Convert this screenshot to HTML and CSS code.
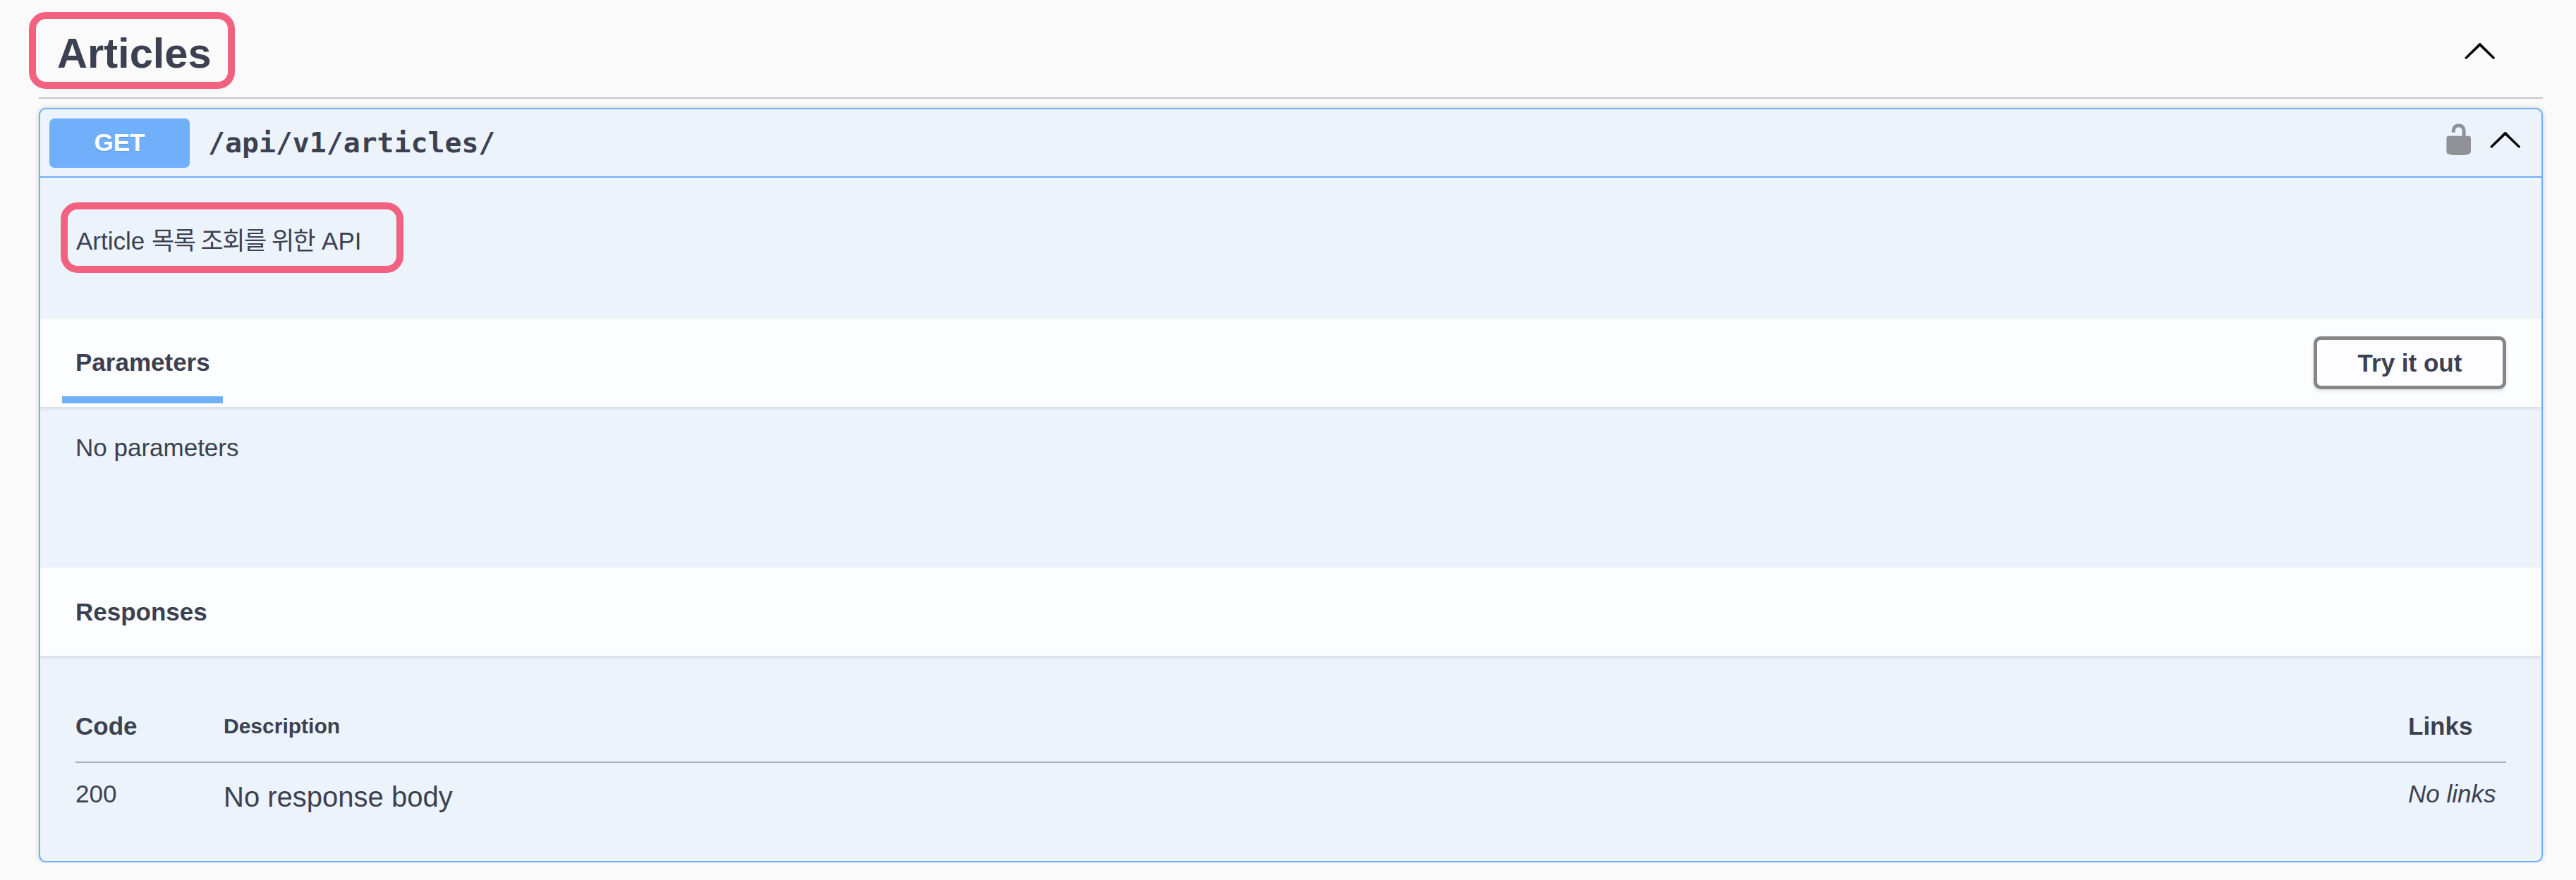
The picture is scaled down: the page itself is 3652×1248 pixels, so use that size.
FILE: index.html
```html
<!DOCTYPE html>
<html lang="ko">
<head>
    <meta charset="UTF-8">
    <meta name="viewport" content="width=device-width, initial-scale=1.0">
    <title>Articles API</title>
    <link rel="stylesheet" href="styles.css">
</head>
<body>
    <section class="tag-section">
        <div class="tag-header">
            <h4 class="tag-title callout">Articles</h4>
            <svg class="arrow-up tag-arrow" viewBox="0 0 20 20"><path d="M17.418 6.109c.272-.268.709-.268.979 0s.271.701 0 .969l-7.908 7.83c-.27.268-.707.268-.979 0l-7.908-7.83c-.27-.268-.27-.701 0-.969.271-.268.709-.268.979 0L10 13.25l7.418-7.141z"/></svg>
        </div>

        <div class="opblock">
            <div class="opblock-summary">
                <span class="method">GET</span>
                <span class="path">/api/v1/articles/</span>
                <svg class="lock" viewBox="0 0 20 20"><path d="M15.8 8H14V5.6C14 2.703 12.665 1 10 1 7.334 1 6 2.703 6 5.6V6h2v-.801C8 3.754 8.797 3 10 3c1.203 0 2 .754 2 2.199V8H4c-.553 0-1 .646-1 1.199V17c0 .549.428 1.139.951 1.307l1.197.387C5.672 18.861 6.55 19 7.1 19h5.8c.549 0 1.428-.139 1.951-.307l1.196-.387c.524-.167.953-.757.953-1.306V9.199C17 8.646 16.352 8 15.8 8z"/></svg>
                <svg class="arrow-up summary-arrow" viewBox="0 0 20 20"><path d="M17.418 6.109c.272-.268.709-.268.979 0s.271.701 0 .969l-7.908 7.83c-.27.268-.707.268-.979 0l-7.908-7.83c-.27-.268-.27-.701 0-.969.271-.268.709-.268.979 0L10 13.25l7.418-7.141z"/></svg>
            </div>

            <div class="description">
                <p class="description-text callout">Article <span class="hangul">목록 조회를 위한</span> API</p>
            </div>

            <div class="section-header">
                <div class="tab">Parameters</div>
                <button class="try-out" type="button">Try it out</button>
            </div>
            <div class="parameters">No parameters</div>

            <div class="section-header responses-header">Responses</div>
            <div class="responses">
                <table class="responses-table">
                    <thead>
                        <tr>
                            <th class="col-code">Code</th>
                            <th class="col-desc">Description</th>
                            <th class="col-links">Links</th>
                        </tr>
                    </thead>
                    <tbody>
                        <tr>
                            <td>200</td>
                            <td class="response-desc">No response body</td>
                            <td class="no-links">No links</td>
                        </tr>
                    </tbody>
                </table>
            </div>
        </div>
    </section>
</body>
</html>
```

FILE: styles.css
```css
body {
    margin: 0;
    background-color: #fafafa;
    color: #3b4151;
    font-family: "Liberation Sans", "Noto Sans CJK KR", sans-serif;
    font-size: 35px;
}
.tag-section {
    padding: 0 47px 0 55px;
}
.tag-header {
    display: flex;
    justify-content: space-between;
    align-items: flex-start;
    height: 140px;
    box-sizing: border-box;
    padding: 17px 65px 0 0;
    border-bottom: 2px solid #c4c5c9;
}
.callout {
    border: 10px solid #f26280;
    border-radius: 24px;
}
.tag-title {
    margin: 0 0 0 -14px;
    padding: 9px 23px 0 30px;
    font-size: 59.6px;
    line-height: 80px;
    font-weight: 700;
}
.arrow-up {
    width: 49.4px;
    height: 49.4px;
    fill: #000;
    transform: rotate(180deg);
}
.tag-arrow {
    margin-top: 32px;
}
.opblock {
    margin-top: 13px;
    height: 1070px;
    box-sizing: border-box;
    background-color: #ecf3fb;
    border: 2px solid #6eaffb;
    border-radius: 10px;
    box-shadow: 0 0 7px rgba(0, 0, 0, 0.19);
    overflow: hidden;
}
.opblock-summary {
    display: flex;
    align-items: center;
    height: 97px;
    box-sizing: border-box;
    padding: 0 27px 0 13px;
    border-bottom: 2px solid #6eaffb;
}
.method {
    width: 199px;
    height: 70px;
    line-height: 67px;
    text-align: center;
    background-color: #70b0fb;
    border-radius: 7px;
    color: #fff;
    font-size: 35px;
    font-weight: 700;
    text-shadow: 0 2px 0 rgba(0, 0, 0, 0.1);
}
.path {
    margin-left: 26px;
    flex: 1;
    font-family: "DejaVu Sans Mono", monospace;
    font-size: 39.8px;
    line-height: 46px;
    margin-bottom: 2px;
    font-weight: 700;
}
.lock {
    width: 49.4px;
    height: 49.4px;
    margin-bottom: 10px;
    fill: #8f9196;
}
.summary-arrow {
    margin-left: 16px;
    margin-bottom: 5px;
}
.description {
    height: 200px;
    box-sizing: border-box;
    padding: 35px 0 0 29px;
}
.description-text {
    display: inline-block;
    margin: 0;
    padding: 12px 50px 2px 12px;
    line-height: 66px;
}
.hangul {
    letter-spacing: -1.5px;
}
.section-header {
    display: flex;
    justify-content: space-between;
    align-items: center;
    height: 125px;
    box-sizing: border-box;
    padding: 0 50px 0 31px;
    background-color: #fcfdfe;
    box-shadow: 0 2.5px 5px rgba(0, 0, 0, 0.1);
    font-weight: 700;
}
.tab {
    align-self: flex-end;
    width: 228px;
    height: 120px;
    box-sizing: border-box;
    margin-bottom: 5px;
    padding: 42px 0 0 19px;
    border-bottom: 10px solid #70b0fb;
    line-height: 40px;
}
.try-out {
    width: 273px;
    height: 75px;
    padding: 0;
    background-color: #fdfdff;
    border: 5px solid #868686;
    border-radius: 10px;
    box-shadow: 0 2.5px 5px rgba(0, 0, 0, 0.1);
    color: #3b4151;
    font-family: inherit;
    font-size: 35px;
    font-weight: 700;
}
.parameters {
    height: 228px;
    box-sizing: border-box;
    padding: 37px 0 0 50px;
    line-height: 41px;
}
.responses-header {
    padding-left: 50px;
}
.responses {
    padding: 49px 50px 0 50px;
}
.responses-table {
    width: 100%;
    table-layout: fixed;
    border-collapse: separate;
    border-spacing: 0;
}
.responses-table th {
    height: 101px;
    padding: 0;
    border-bottom: 2px solid #a9b0bd;
    text-align: left;
    font-weight: 700;
}
.responses-table .col-code {
    width: 210px;
}
.responses-table .col-desc {
    font-size: 30px;
}
.responses-table .col-links {
    width: 139px;
}
.responses-table td {
    padding: 24px 0 0;
    line-height: 40px;
    vertical-align: top;
}
.responses-table .response-desc {
    padding-top: 28px;
    font-size: 40px;
}
.no-links {
    font-style: italic;
}
```
